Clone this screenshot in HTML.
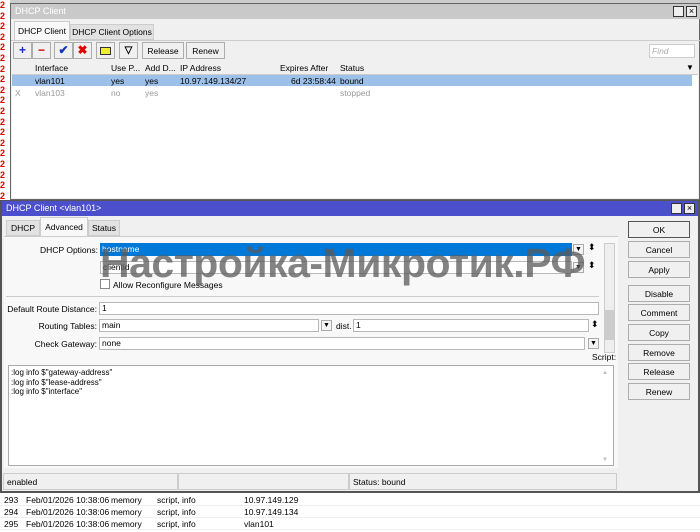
<!DOCTYPE html>
<html><head><meta charset="utf-8"><style>
*{box-sizing:border-box;margin:0;padding:0}
body{width:700px;height:532px;position:relative;overflow:hidden;background:#fff;font-family:"Liberation Sans",sans-serif;font-size:8.5px;color:#000}
.a{position:absolute}
.btn{position:absolute;background:#f0f0f0;border:1px solid #adadad;text-align:center;line-height:17px;font-size:8.5px}
.inp{position:absolute;background:#fff;border:1px solid #b8b8b8;height:13px;line-height:11px;padding-left:2px;font-size:8.5px}
.lbl{position:absolute;text-align:right;font-size:8.5px}
.tb{position:absolute;width:19px;height:17px;background:#f0f0f0;border:1px solid #adadad;text-align:center;line-height:15px;font-weight:bold;font-size:12px}
.dd{position:absolute;width:11px;height:11px;border:1px solid #aaa;background:#f4f4f4;font-size:7px;line-height:9px;text-align:center}
</style></head><body>
<div class="a" style="left:0;top:0;width:10px;height:200px;color:#d00;font-size:9px;line-height:10.6px;font-weight:bold">2<br>2<br>2<br>2<br>2<br>2<br>2<br>2<br>2<br>2<br>2<br>2<br>2<br>2<br>2<br>2<br>2<br>2<br>2</div>
<div class="a" style="left:10px;top:0;width:690px;height:4px;background:#ccc"></div>
<div class="a" style="left:10px;top:3px;width:690px;height:197px;background:#f0f0f0;border:1px solid #666"></div>
<div class="a" style="left:11px;top:4px;width:689px;height:15px;background:#c9c9c9;color:#fff;padding:2px 4px;font-size:9px">DHCP Client</div>
<div class="a" style="left:673px;top:6px;width:11px;height:11px;border:1px solid #333;background:#eee"></div>
<div class="a" style="left:686px;top:6px;width:11px;height:11px;border:1px solid #333;background:#eee;font-size:9px;line-height:9px;text-align:center">×</div>
<div class="a" style="left:14px;top:21px;width:56px;height:20px;background:#f8f8f8;border:1px solid #ccc;border-bottom:none;line-height:18px;text-align:center">DHCP Client</div>
<div class="a" style="left:70px;top:24px;width:84px;height:16px;background:#e2e2e2;border:1px solid #ccc;line-height:14px;text-align:center">DHCP Client Options</div>
<div class="a" style="left:11px;top:40px;width:689px;height:1px;background:#ccc"></div>
<div class="tb" style="left:13px;top:42px;color:#1130c0">+</div>
<div class="tb" style="left:32px;top:42px;color:#c00">−</div>
<div class="tb" style="left:54px;top:42px;color:#1130c0">✔</div>
<div class="tb" style="left:73px;top:42px;color:#d00">✖</div>
<div class="tb" style="left:96px;top:42px"><div style="margin:4px auto;width:11px;height:8px;background:#ee3;border:1px solid #333"></div></div>
<div class="tb" style="left:119px;top:42px;font-size:10px">▽</div>
<div class="btn" style="left:142px;top:42px;width:42px;height:17px">Release</div>
<div class="btn" style="left:186px;top:42px;width:39px;height:17px">Renew</div>
<div class="a" style="left:649px;top:44px;width:46px;height:14px;background:#fff;border:1px solid #ccc;color:#aaa;font-style:italic;padding-left:2px;line-height:12px">Find</div>
<div class="a" style="left:12px;top:62px;width:686px;height:136px;background:#fff"></div>
<div class="a" style="left:12px;top:62px;width:686px;height:13px;background:#f0f0f0;border-bottom:1px solid #ccc"></div>
<div class="a" style="left:35px;top:63px">Interface</div>
<div class="a" style="left:111px;top:63px">Use P...</div>
<div class="a" style="left:145px;top:63px">Add D...</div>
<div class="a" style="left:180px;top:63px">IP Address</div>
<div class="a" style="left:280px;top:63px">Expires After</div>
<div class="a" style="left:340px;top:63px">Status</div>
<div class="a" style="left:686px;top:63px;font-size:8px">▼</div>
<div class="a" style="left:12px;top:75px;width:680px;height:11px;background:#9cc0e8"></div>
<div class="a" style="left:35px;top:76px">vlan101</div><div class="a" style="left:111px;top:76px">yes</div><div class="a" style="left:145px;top:76px">yes</div><div class="a" style="left:180px;top:76px">10.97.149.134/27</div><div class="a" style="left:291px;top:76px">6d 23:58:44</div><div class="a" style="left:340px;top:76px">bound</div>
<div class="a" style="left:15px;top:88px;color:#999">X</div><div class="a" style="left:35px;top:88px;color:#999">vlan103</div><div class="a" style="left:111px;top:88px;color:#999">no</div><div class="a" style="left:145px;top:88px;color:#999">yes</div><div class="a" style="left:340px;top:88px;color:#999">stopped</div>
<div class="a" style="left:0;top:200px;width:700px;height:293px;background:#f0f0f0;border:2px solid #555"></div>
<div class="a" style="left:2px;top:201px;width:696px;height:15px;background:#4b4fcc;color:#fff;padding:2px 4px;font-size:9px">DHCP Client &lt;vlan101&gt;</div>
<div class="a" style="left:671px;top:203px;width:11px;height:11px;border:1px solid #333;background:#eee"></div>
<div class="a" style="left:684px;top:203px;width:11px;height:11px;border:1px solid #333;background:#eee;font-size:9px;line-height:9px;text-align:center">×</div>
<div class="a" style="left:6px;top:220px;width:34px;height:16px;background:#e2e2e2;border:1px solid #ccc;text-align:center;line-height:14px">DHCP</div>
<div class="a" style="left:40px;top:217px;width:48px;height:20px;background:#f8f8f8;border:1px solid #ccc;border-bottom:none;text-align:center;line-height:18px">Advanced</div>
<div class="a" style="left:88px;top:220px;width:32px;height:16px;background:#e2e2e2;border:1px solid #ccc;text-align:center;line-height:14px">Status</div>
<div class="a" style="left:4px;top:236px;width:614px;height:232px;background:#f8f8f8;border-top:1px solid #ccc"></div>
<div class="lbl" style="left:0;top:245px;width:98px">DHCP Options:</div>
<div class="a" style="left:100px;top:243px;width:472px;height:13px;background:#0078d7;color:#fff;padding-left:2px;line-height:12px">hostname</div>
<div class="dd" style="left:573px;top:244px">▼</div><div class="a" style="left:588px;top:242px;font-size:9px">⬍</div>
<div class="inp" style="left:100px;top:261px;width:472px">clientid</div>
<div class="dd" style="left:573px;top:262px">▼</div><div class="a" style="left:588px;top:260px;font-size:9px">⬍</div>
<div class="a" style="left:100px;top:279px;width:10px;height:10px;background:#fff;border:1px solid #888"></div>
<div class="a" style="left:113px;top:280px">Allow Reconfigure Messages</div>
<div class="a" style="left:6px;top:296px;width:593px;height:1px;background:#ccc"></div>
<div class="lbl" style="left:0;top:304px;width:97px">Default Route Distance:</div>
<div class="inp" style="left:99px;top:302px;width:500px">1</div>
<div class="lbl" style="left:0;top:321px;width:97px">Routing Tables:</div>
<div class="inp" style="left:99px;top:319px;width:220px">main</div>
<div class="dd" style="left:321px;top:320px">▼</div>
<div class="a" style="left:336px;top:321px">dist.</div>
<div class="inp" style="left:353px;top:319px;width:236px">1</div><div class="a" style="left:591px;top:319px;font-size:9px">⬍</div>
<div class="lbl" style="left:0;top:339px;width:97px">Check Gateway:</div>
<div class="inp" style="left:99px;top:337px;width:486px">none</div>
<div class="dd" style="left:588px;top:338px">▼</div>
<div class="a" style="left:604px;top:243px;width:11px;height:110px;background:#eee;border:1px solid #ccc"></div>
<div class="a" style="left:605px;top:310px;width:9px;height:30px;background:#ccc"></div>
<div class="a" style="left:592px;top:352px">Script:</div>
<div class="a" style="left:8px;top:365px;width:606px;height:101px;background:#fff;border:1px solid #aaa;padding:2px;line-height:9.5px;font-size:8px">:log info $"gateway-address"<br>:log info $"lease-address"<br>:log info $"interface"</div>
<div class="a" style="left:602px;top:370px;color:#bbb;font-size:6px">▲</div>
<div class="a" style="left:602px;top:457px;color:#bbb;font-size:6px">▼</div>
<div class="a" style="left:3px;top:473px;width:175px;height:17px;border:1px solid #ccc;padding:3px 3px;font-size:8.5px">enabled</div>
<div class="a" style="left:178px;top:473px;width:171px;height:17px;border:1px solid #ccc"></div>
<div class="a" style="left:349px;top:473px;width:268px;height:17px;border:1px solid #ccc;padding:3px 3px">Status: bound</div>
<div class="btn" style="left:628px;top:221px;width:62px;height:17px;border:1px solid #555">OK</div>
<div class="btn" style="left:628px;top:241px;width:62px;height:17px">Cancel</div>
<div class="btn" style="left:628px;top:261px;width:62px;height:17px">Apply</div>
<div class="btn" style="left:628px;top:285px;width:62px;height:17px">Disable</div>
<div class="btn" style="left:628px;top:304px;width:62px;height:17px">Comment</div>
<div class="btn" style="left:628px;top:324px;width:62px;height:17px">Copy</div>
<div class="btn" style="left:628px;top:344px;width:62px;height:17px">Remove</div>
<div class="btn" style="left:628px;top:363px;width:62px;height:17px">Release</div>
<div class="btn" style="left:628px;top:383px;width:62px;height:17px">Renew</div>
<div class="a" style="left:100px;top:240px;font-size:41px;font-weight:bold;color:rgba(90,90,90,0.75);letter-spacing:-0.5px;white-space:nowrap">Настройка-Микротик.РФ</div>
<div class="a" style="left:0;top:494px;width:700px;font-size:8.5px;line-height:12px">
<div style="border-bottom:1px solid #eee;height:12px;position:relative"><span class="a" style="left:4px">293</span><span class="a" style="left:26px">Feb/01/2026 10:38:06</span><span class="a" style="left:111px">memory</span><span class="a" style="left:157px">script, info</span><span class="a" style="left:244px">10.97.149.129</span></div>
<div style="border-bottom:1px solid #eee;height:12px;position:relative"><span class="a" style="left:4px">294</span><span class="a" style="left:26px">Feb/01/2026 10:38:06</span><span class="a" style="left:111px">memory</span><span class="a" style="left:157px">script, info</span><span class="a" style="left:244px">10.97.149.134</span></div>
<div style="border-bottom:1px solid #eee;height:12px;position:relative"><span class="a" style="left:4px">295</span><span class="a" style="left:26px">Feb/01/2026 10:38:06</span><span class="a" style="left:111px">memory</span><span class="a" style="left:157px">script, info</span><span class="a" style="left:244px">vlan101</span></div>
</div>
</body></html>
